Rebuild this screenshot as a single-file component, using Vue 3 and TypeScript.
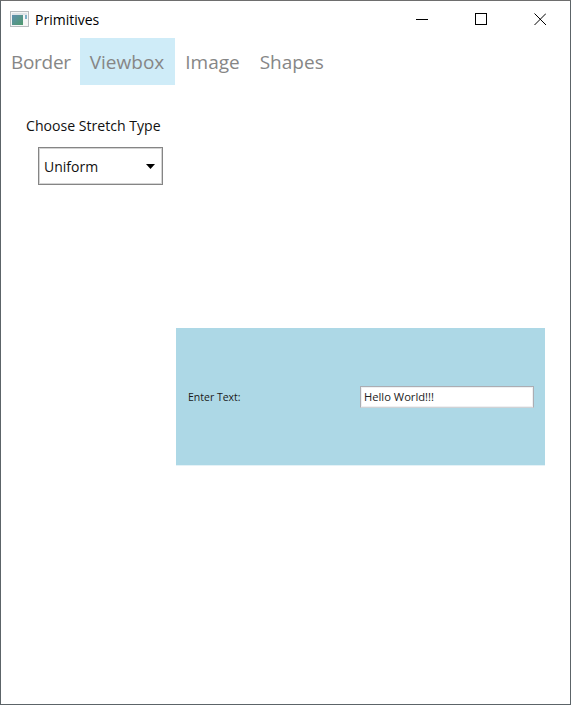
<script setup lang="ts">
const tabs: string[] = ['Border', 'Viewbox', 'Image', 'Shapes']
const activeTab = 'Viewbox'
</script>

<template>
  <div class="window">
    <header class="titlebar">
      <svg class="app-icon" width="20" height="16" viewBox="0 0 20 16">
        <defs>
          <linearGradient id="ic" x1="0" y1="0" x2="1" y2="1">
            <stop offset="0" stop-color="#5f8fb0" />
            <stop offset="1" stop-color="#4f9a6c" />
          </linearGradient>
        </defs>
        <rect x="0.5" y="0.5" width="18" height="15" fill="#f6f6f6" stroke="#b8bcbf" />
        <rect x="2" y="2" width="15" height="2" fill="#dfe4e8" />
        <rect x="2" y="4" width="11" height="10" fill="url(#ic)" />
        <rect x="15" y="4" width="2" height="4" fill="#7fb0c8" />
      </svg>
      <span class="title">Primitives</span>
      <div class="controls">
        <svg width="12" height="12" viewBox="0 0 12 12"><path d="M0 6.5H12" stroke="#000" fill="none" /></svg>
        <svg width="12" height="12" viewBox="0 0 12 12"><rect x="0.5" y="0.5" width="11" height="11" stroke="#000" fill="none" /></svg>
        <svg width="12" height="12" viewBox="0 0 12 12"><path d="M0.5 0.5L12 12M12 0.5L0.5 12" stroke="#000" fill="none" /></svg>
      </div>
    </header>

    <nav class="tabs">
      <div v-for="tab in tabs" :key="tab" class="tab" :class="{ active: tab === activeTab }">{{ tab }}</div>
    </nav>

    <main class="content">
      <aside class="side">
        <div class="side-label">Choose Stretch Type</div>
        <div class="combo">
          <span>Uniform</span>
          <svg width="9" height="5" viewBox="0 0 9 5"><path d="M0 0H9L4.5 5Z" fill="#000" /></svg>
        </div>
      </aside>
      <section class="stage">
        <div class="panel">
          <label class="panel-label">Enter Text:</label>
          <input class="panel-input" type="text" value="Hello World!!!" />
        </div>
      </section>
    </main>
  </div>
</template>

<style>
html, body { margin: 0; padding: 0; background: #fff; }
</style>

<style scoped>
.window {
  width: 571px;
  height: 705px;
  box-sizing: border-box;
  border: 1px solid #5c6468;
  border-top-color: #6e6e6e;
  background: #fff;
  display: flex;
  flex-direction: column;
  font-family: "Open Sans", "Noto Sans", sans-serif;
  overflow: hidden;
}
.titlebar {
  height: 37px;
  flex: none;
  display: flex;
  align-items: flex-start;
  padding: 10px 0 0 9px;
  box-sizing: border-box;
}
.app-icon { flex: none; margin-right: 5px; }
.title {
  font-size: 14px;
  line-height: 18px;
  color: #000;
}
.controls {
  margin-left: auto;
  display: flex;
  gap: 47px;
  padding: 2px 24px 0 0;
}
.tabs {
  height: 47px;
  flex: none;
  display: flex;
}
.tab {
  padding: 1px 10px 0;
  font-size: 19px;
  line-height: 46px;
  color: #868686;
}
.tab:first-child { letter-spacing: -0.3px; padding-right: 9px; }
.tab.active { background: #cfecf8; padding-right: 11px; }
.content {
  flex: 1;
  display: grid;
  grid-template-columns: 175px 1fr;
  min-height: 0;
}
.side {
  display: flex;
  flex-direction: column;
  padding: 31px 0 0 25px;
}
.side-label {
  font-size: 14.1px;
  line-height: 19px;
  color: #111;
  white-space: nowrap;
}
.combo {
  width: 125px;
  height: 38px;
  box-sizing: border-box;
  margin: 12px 0 0 12px;
  border: 1px solid #858585;
  box-shadow: inset 0 0 0 1px #d4d4d4;
  display: flex;
  align-items: center;
  justify-content: space-between;
  padding: 0 7px 0 5px;
  font-size: 14px;
  color: #111;
}
.stage {
  display: flex;
  align-items: center;
  padding: 4px 25px 0 0;
}
.panel {
  width: 100%;
  height: 137px;
  background: #add8e6;
  box-shadow: 0 1px 0 #e4f2f7;
  display: flex;
  align-items: center;
  justify-content: space-between;
  padding: 0 11px 0 12px;
  box-sizing: border-box;
}
.panel-label {
  font-size: 10.5px;
  color: #1a1a1a;
}
.panel-input {
  width: 174px;
  height: 22px;
  box-sizing: border-box;
  border: 1px solid #abadb3;
  border-bottom-color: #cfd2d6;
  box-shadow: inset 0 0 0 1px #eef0f2;
  background: #fff;
  padding: 0 3px;
  margin: 0;
  outline: none;
  font-family: inherit;
  font-size: 11.2px;
  color: #222;
}
</style>
